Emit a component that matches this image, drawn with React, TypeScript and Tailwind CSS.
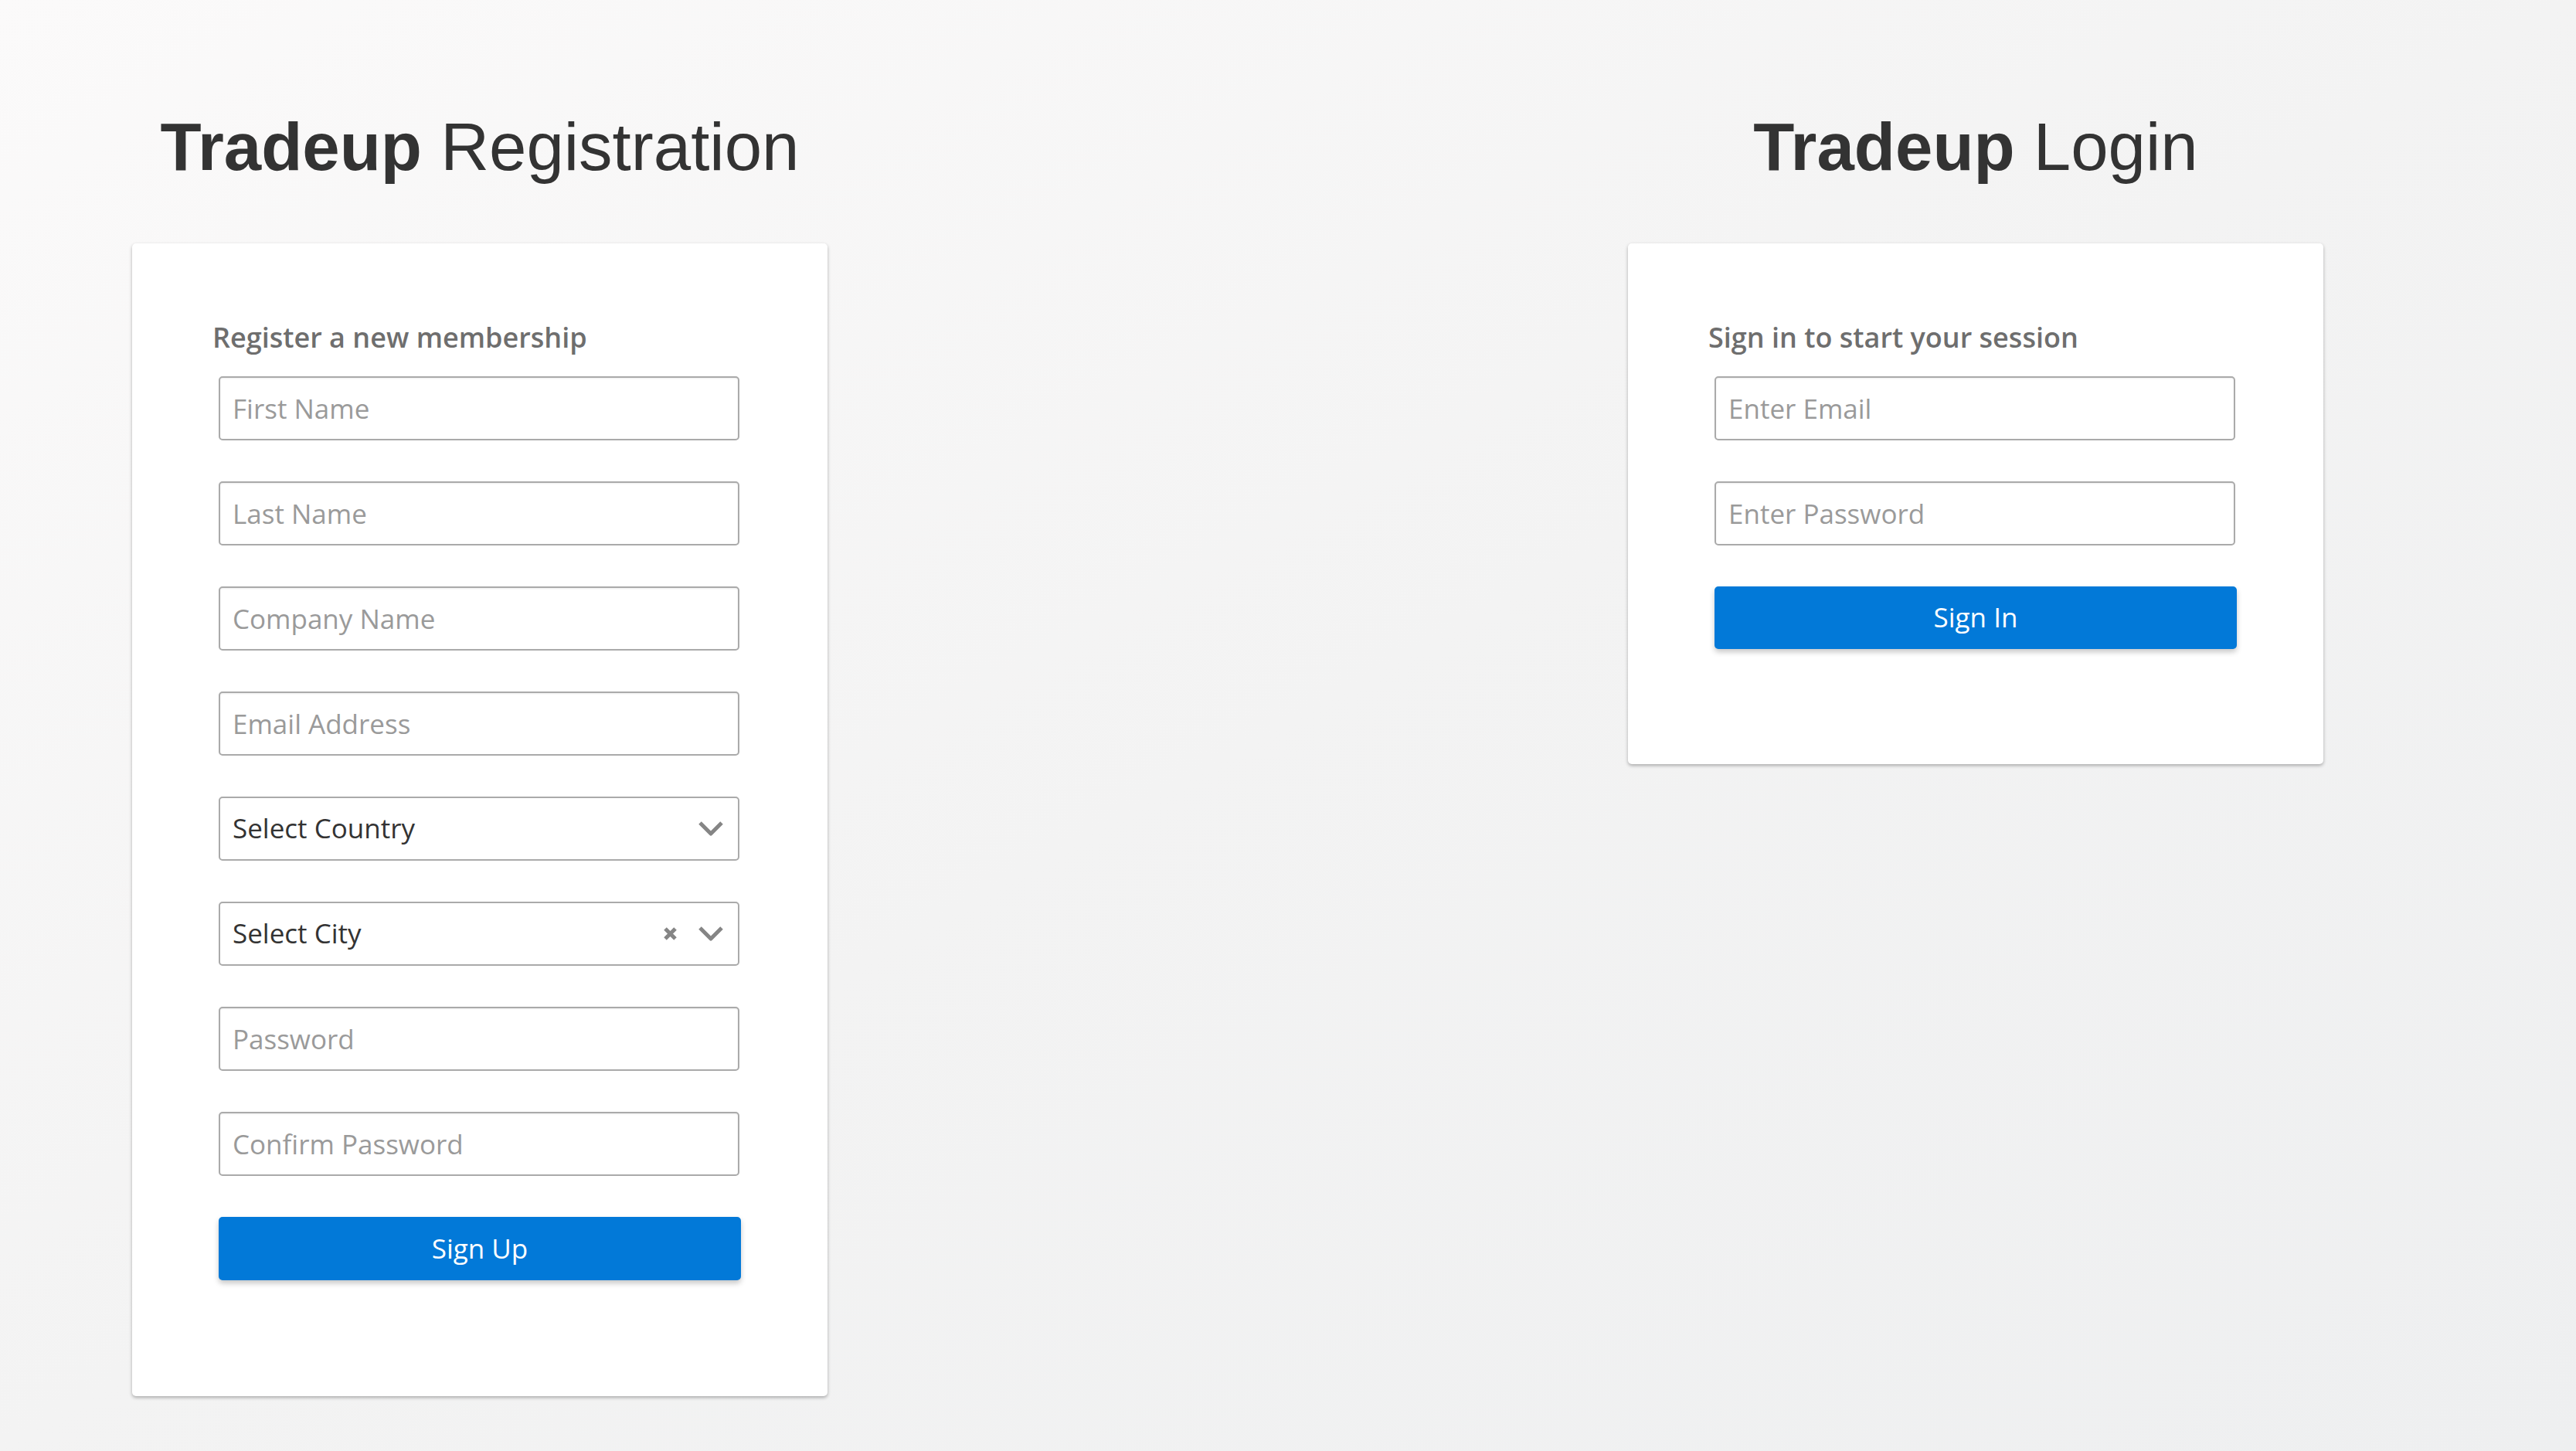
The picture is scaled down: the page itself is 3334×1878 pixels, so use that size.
import React from 'react';

const openSans = "font-['Open_Sans',sans-serif]";

const TextField: React.FC<{ placeholder: string; type?: string }> = ({ placeholder, type = 'text' }) => (
  <input
    type={type}
    placeholder={placeholder}
    className="mx-[8px] block h-[83px] w-[674px] rounded-[5px] border-2 border-[#aaaaaa] bg-white px-[16px] text-[35px] text-[#333] shadow-[inset_0_1px_2px_rgba(0,0,0,0.08)] outline-none placeholder:text-[#9a9a9a]"
  />
);

const Chevron = () => (
  <svg width="34" height="21" viewBox="0 0 34 21" fill="none">
    <polyline points="3,3 17,17 31,3" stroke="#858585" strokeWidth="5" strokeLinejoin="round" />
  </svg>
);

const Clear = () => (
  <svg width="19" height="19" viewBox="0 0 19 19" fill="none">
    <path d="M3 3 L16 16 M16 3 L3 16" stroke="#858585" strokeWidth="5" />
  </svg>
);

const SelectField: React.FC<{ label: string; clearable?: boolean }> = ({ label, clearable }) => (
  <div className="mx-[8px] flex h-[83px] w-[674px] items-center rounded-[5px] border-2 border-[#aaaaaa] bg-white pl-[16px] pr-[18px] text-[35px] text-[#333]">
    <span className="flex-1">{label}</span>
    <div className="flex items-center gap-[26px]">
      {clearable && <Clear />}
      <Chevron />
    </div>
  </div>
);

const SubmitButton: React.FC<{ label: string; h?: string }> = ({ label, h = 'h-[82px]' }) => (
  <button
    className={`mx-[8px] block ${h} w-[676px] rounded-[5px] bg-[#0279d8] text-[35px] text-white shadow-[0_4px_7px_rgba(0,0,0,0.22)]`}
  >
    {label}
  </button>
);

const Title: React.FC<{ strong: string; rest: string }> = ({ strong, rest }) => (
  <h1 className="mb-[82px] text-center font-['Liberation_Sans',Arial,sans-serif] text-[87px] leading-none text-[#333]">
    <span className="font-bold">{strong}</span> {rest}
  </h1>
);

const Card: React.FC<{ heading: string; pb: string; children: React.ReactNode }> = ({ heading, pb, children }) => (
  <div className={`w-[900px] rounded-[5px] bg-white px-[104px] pt-[104px] ${pb} shadow-[0_2px_4px_rgba(0,0,0,0.3)] ${openSans}`}>
    <h2 className="mb-[32px] text-[36px] font-semibold leading-none text-[#6e6e6e]">{heading}</h2>
    <div className="flex flex-col gap-[53px]">{children}</div>
  </div>
);

export default function App() {
  return (
    <div className="min-h-screen w-full bg-gradient-to-br from-[#fbfafa] via-[#f3f3f3] to-[#eeeff0]">
      <div className="flex items-start gap-[1036px] pl-[171px] pt-[146px]">
        <section className="flex w-[900px] flex-col items-center">
          <Title strong="Tradeup" rest="Registration" />
          <Card heading="Register a new membership" pb="pb-[150px]">
            <TextField placeholder="First Name" />
            <TextField placeholder="Last Name" />
            <TextField placeholder="Company Name" />
            <TextField placeholder="Email Address" type="email" />
            <SelectField label="Select Country" />
            <SelectField label="Select City" clearable />
            <TextField placeholder="Password" type="password" />
            <TextField placeholder="Confirm Password" type="password" />
            <SubmitButton label="Sign Up" />
          </Card>
        </section>

        <section className="flex w-[900px] flex-col items-center">
          <Title strong="Tradeup" rest="Login" />
          <Card heading="Sign in to start your session" pb="pb-[149px]">
            <TextField placeholder="Enter Email" type="email" />
            <TextField placeholder="Enter Password" type="password" />
            <SubmitButton label="Sign In" h="h-[81px]" />
          </Card>
        </section>
      </div>
    </div>
  );
}
